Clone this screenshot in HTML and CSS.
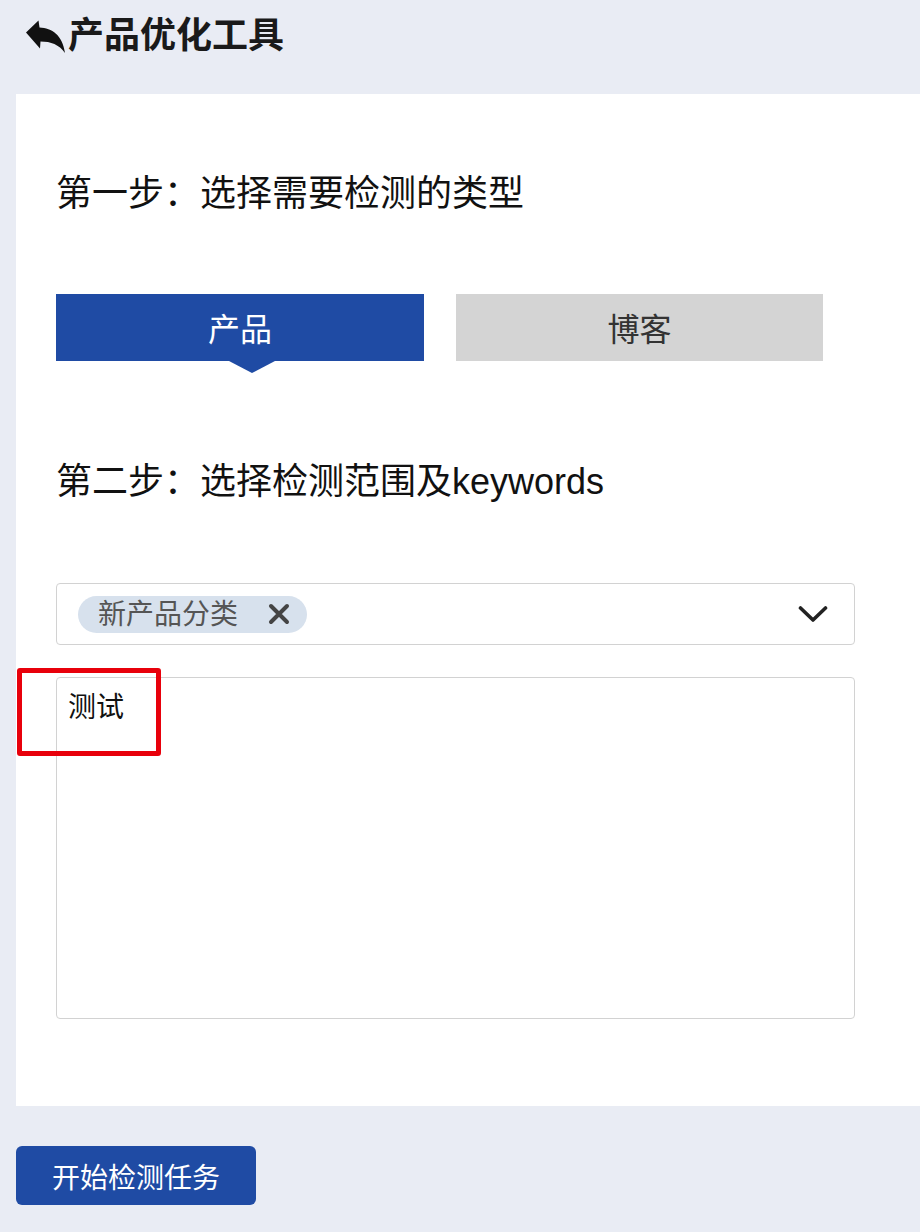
FILE: index.html
```html
<!DOCTYPE html>
<html lang="zh-CN">
<head>
<meta charset="utf-8">
<title>产品优化工具</title>
<link rel="stylesheet" href="styles.css">
</head>
<body>
<header class="header">
  <svg class="back-icon" viewBox="0 0 40 34" width="40" height="34" aria-hidden="true">
    <path d="M0 12.5 L12.5 0.5 L13.5 7.5 C26 8 36.5 15 39 33 C33 24.5 25 21.5 14.5 21.5 L14 28.5 Z" fill="#111"/>
  </svg>
  <h1 class="title">产品优化工具</h1>
</header>

<main class="panel">
  <h2 class="step">第一步：选择需要检测的类型</h2>
  <div class="tabs">
    <div class="tab tab-active">产品</div>
    <div class="tab">博客</div>
  </div>

  <h2 class="step step-two">第二步：选择检测范围及keywords</h2>

  <div class="select">
    <span class="tag">新产品分类<svg class="tag-close" viewBox="0 0 22 22" width="22" height="22" aria-hidden="true"><path d="M3 3 L19 19 M19 3 L3 19" stroke="#444" stroke-width="4" stroke-linecap="round"/></svg></span>
    <svg class="chevron" viewBox="0 0 30 18" width="30" height="18" aria-hidden="true">
      <path d="M2.5 3 L15 15 L27.5 3" fill="none" stroke="#222" stroke-width="3.6" stroke-linecap="round" stroke-linejoin="round"/>
    </svg>
  </div>

  <div class="textarea">测试</div>

  <div class="highlight"></div>
</main>

<div class="actions">
  <button class="btn">开始检测任务</button>
</div>
</body>
</html>
```

FILE: styles.css
```css
* { box-sizing: border-box; }

body {
  margin: 0;
  background: #e9ecf4;
  font-family: "Liberation Sans", "Noto Sans CJK SC", sans-serif;
  color: #111;
}

.header {
  height: 72px;
  display: flex;
  align-items: center;
  padding-left: 26px;
  margin-bottom: 22px;
}

.back-icon {
  display: block;
  width: 40px;
  height: 34px;
  margin-top: 2px;
}

.title {
  margin: 0 0 0 2px;
  font-size: 36px;
  line-height: 36px;
  font-weight: 700;
  color: #1a1a1a;
}

.panel {
  position: relative;
  margin-left: 16px;
  height: 1012px;
  background: #fff;
  padding: 82px 0 0 40px;
}

.step {
  margin: 0;
  font-size: 36px;
  line-height: 36px;
  font-weight: 400;
  color: #111;
}

.step-two {
  margin-top: 103px;
}

.tabs {
  display: flex;
  gap: 32px;
  margin-top: 82px;
}

.tab {
  position: relative;
  width: 367px;
  height: 67px;
  display: flex;
  align-items: center;
  justify-content: center;
  background: #d4d4d4;
  color: #333;
  font-size: 32px;
  padding-bottom: 2px;
}

.tab-active {
  width: 368px;
  background: #1f4ba4;
  color: #fff;
}

.tab-active::after {
  content: "";
  position: absolute;
  left: 173px;
  top: 67px;
  border-left: 23px solid transparent;
  border-right: 23px solid transparent;
  border-top: 12px solid #1f4ba4;
}

.select {
  margin-top: 83px;
  width: 799px;
  height: 62px;
  border: 1px solid #d2d2d2;
  border-radius: 4px;
  display: flex;
  align-items: center;
  justify-content: space-between;
  padding: 0 26px 0 21px;
}

.tag {
  display: flex;
  align-items: center;
  height: 37px;
  padding: 0 17px 0 20px;
  border-radius: 19px;
  background: #d7e1ed;
  color: #555;
  font-size: 28px;
  line-height: 37px;
}

.tag-close {
  display: block;
  margin-left: 30px;
}

.chevron {
  display: block;
}

.textarea {
  margin-top: 32px;
  width: 799px;
  height: 342px;
  border: 1px solid #d2d2d2;
  border-radius: 4px;
  padding: 10px 11px;
  font-size: 28px;
  line-height: 40px;
  color: #111;
}

.highlight {
  position: absolute;
  left: 1px;
  top: 574px;
  width: 144px;
  height: 88px;
  border: 5px solid #e8000b;
  border-radius: 3px;
}

.actions {
  padding: 40px 0 0 16px;
}

.btn {
  display: block;
  width: 240px;
  height: 59px;
  border: none;
  border-radius: 6px;
  background: #1f4ba4;
  color: #fff;
  font-family: "Liberation Sans", "Noto Sans CJK SC", sans-serif;
  font-size: 28px;
  padding: 0;
}
```
